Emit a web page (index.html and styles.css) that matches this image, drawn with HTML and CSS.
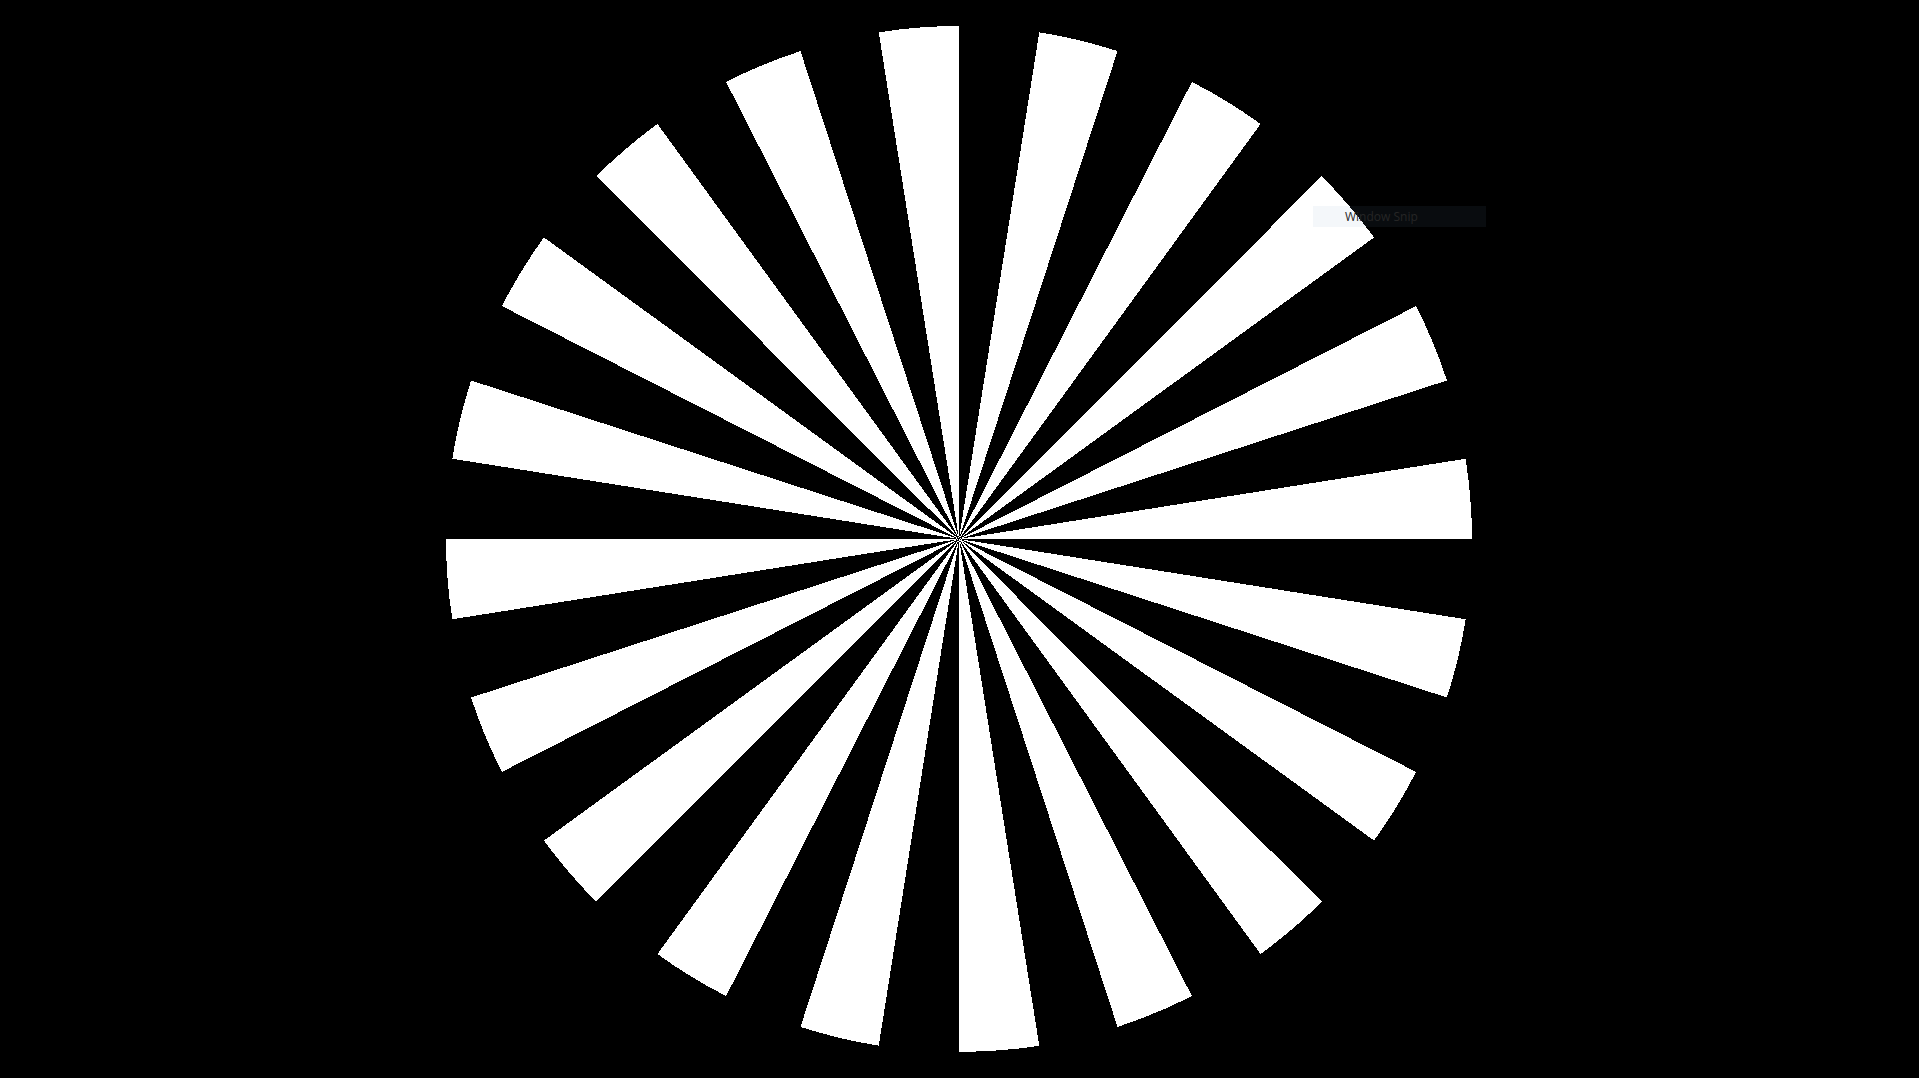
FILE: index.html
```html
<!DOCTYPE html>
<html lang="en">
  <head>
    <meta charset="UTF-8" />
    <title>Siemens Star</title>
    <link rel="stylesheet" href="styles.css">
  </head>
  <body>
    <div class="stage">
      <svg class="star" width="1919" height="1078" viewBox="0 0 1919 1078" shape-rendering="crispEdges">
        <defs>
          <path id="wedge" d="M0 0 L0 -513 A513 513 0 0 0 -80.25 -506.68 Z" fill="#fff" />
        </defs>
        <g transform="translate(959 539)">
          <use href="#wedge" transform="rotate(0)" />
          <use href="#wedge" transform="rotate(18)" />
          <use href="#wedge" transform="rotate(36)" />
          <use href="#wedge" transform="rotate(54)" />
          <use href="#wedge" transform="rotate(72)" />
          <use href="#wedge" transform="rotate(90)" />
          <use href="#wedge" transform="rotate(108)" />
          <use href="#wedge" transform="rotate(126)" />
          <use href="#wedge" transform="rotate(144)" />
          <use href="#wedge" transform="rotate(162)" />
          <use href="#wedge" transform="rotate(180)" />
          <use href="#wedge" transform="rotate(198)" />
          <use href="#wedge" transform="rotate(216)" />
          <use href="#wedge" transform="rotate(234)" />
          <use href="#wedge" transform="rotate(252)" />
          <use href="#wedge" transform="rotate(270)" />
          <use href="#wedge" transform="rotate(288)" />
          <use href="#wedge" transform="rotate(306)" />
          <use href="#wedge" transform="rotate(324)" />
          <use href="#wedge" transform="rotate(342)" />
        </g>
      </svg>
      <!-- snipping tool hint -->
      <div class="snip-label">Window Snip</div>
    </div>
  </body>
</html>
```

FILE: styles.css
```css
html,
body {
  margin: 0;
  padding: 0;
  background-color: #000;
  overflow: hidden;
}
.stage {
  position: relative;
  width: 1919px;
  height: 1078px;
}
.star {
  display: block;
}
.snip-label {
  position: absolute;
  left: 1313px;
  top: 206px;
  width: 141px;
  height: 21px;
  padding-left: 32px;
  background: rgba(110, 150, 190, 0.08);
  color: #262626;
  font-family: "Open Sans", "Noto Sans", sans-serif;
  font-size: 12px;
  line-height: 21px;
}
```
